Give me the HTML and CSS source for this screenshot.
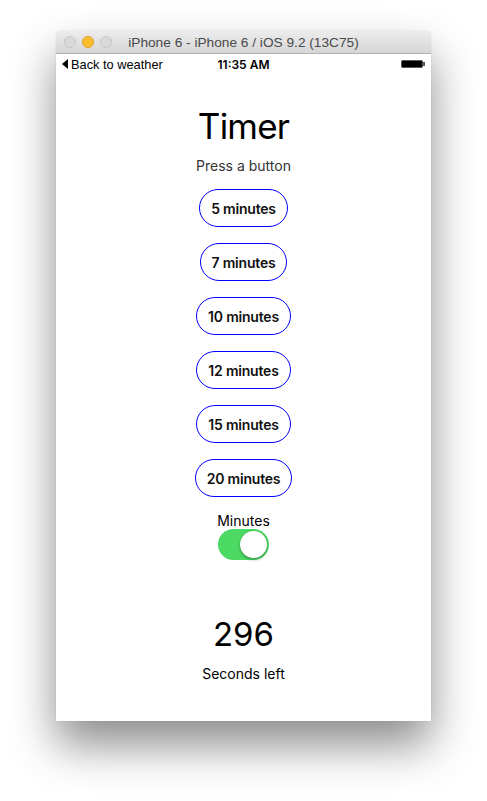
FILE: index.html
```html
<!DOCTYPE html>
<html>
<head>
<meta charset="utf-8">
<link rel="stylesheet" href="styles.css">
</head>
<body>
<div class="window">
  <div class="titlebar">
    <div class="lights">
      <span class="light grey"></span>
      <span class="light yellow"></span>
      <span class="light grey"></span>
    </div>
    <div class="title">iPhone 6 - iPhone 6 / iOS 9.2 (13C75)</div>
  </div>
  <div class="screen">
    <div class="statusbar">
      <div class="back"><svg class="tri" width="6" height="10" viewBox="0 0 6 10"><path d="M6 0 L0 5 L6 10 Z" fill="#000"/></svg>Back to weather</div>
      <div class="time">11:35 AM</div>
      <div class="battery"><span class="cell"></span><span class="nub"></span></div>
    </div>
    <div class="app">
      <div class="heading">Timer</div>
      <div class="subtitle">Press a button</div>
      <div class="buttons">
        <div class="btn">5 minutes</div>
        <div class="btn">7 minutes</div>
        <div class="btn">10 minutes</div>
        <div class="btn">12 minutes</div>
        <div class="btn">15 minutes</div>
        <div class="btn">20 minutes</div>
      </div>
      <div class="label">Minutes</div>
      <div class="switch"><span class="knob"></span></div>
      <div class="count">296</div>
      <div class="caption">Seconds left</div>
    </div>
  </div>
</div>
</body>
</html>
```
FILE: styles.css
```css
html, body {
  margin: 0;
  padding: 0;
  background: #fff;
}
body {
  width: 487px;
  height: 801px;
  overflow: hidden;
  padding-top: 31px;
  padding-left: 56px;
  box-sizing: border-box;
  font-family: Inter, "Liberation Sans", sans-serif;
}
.window {
  width: 375px;
  border-radius: 5px 5px 0 0;
  box-shadow: 0 24px 45px rgba(0,0,0,0.45), 0 0 1px rgba(0,0,0,0.3);
  background: #fff;
}
.titlebar {
  height: 23px;
  box-sizing: border-box;
  border-radius: 5px 5px 0 0;
  background: linear-gradient(#ececec, #d6d6d6);
  border-bottom: 1px solid #b3b3b3;
  display: flex;
  align-items: center;
  position: relative;
}
.lights {
  display: flex;
  gap: 6px;
  padding-left: 8px;
}
.light {
  width: 12px;
  height: 12px;
  border-radius: 50%;
  box-sizing: border-box;
}
.light.grey {
  background: #d9d9d9;
  border: 1px solid #c7c7c7;
}
.light.yellow {
  background: #fdbc2f;
  border: 1px solid #e0a22a;
}
.title {
  flex: 1;
  text-align: center;
  font-family: "Liberation Sans", Arial, sans-serif;
  font-size: 13.7px;
  color: #4a4a4a;
  margin-right: 60px;
  margin-left: 4px;
}
.screen {
  height: 667px;
  background: #fff;
}
.statusbar {
  height: 20px;
  display: flex;
  align-items: center;
  justify-content: space-between;
  padding: 0 6px 0 6px;
  font-size: 12px;
  position: relative;
}
.back {
  display: flex;
  align-items: center;
  gap: 3px;
  font-family: "Liberation Sans", Arial, sans-serif;
  font-size: 12.8px;
  color: #000;
}
.time {
  position: absolute;
  left: 0;
  right: 0;
  text-align: center;
  font-weight: 600;
  font-size: 12px;
  color: #000;
}
.battery {
  display: flex;
  align-items: center;
}
.cell {
  width: 22px;
  height: 8px;
  background: #000;
  border: 1px solid #555;
  border-radius: 1.5px;
  box-sizing: border-box;
}
.nub {
  width: 2px;
  height: 4px;
  background: #555;
}
.app {
  display: flex;
  flex-direction: column;
  align-items: center;
}
.heading {
  margin-top: 31px;
  font-size: 35px;
  letter-spacing: -0.8px;
  line-height: 43px;
  color: #000;
}
.subtitle {
  margin-top: 9px;
  font-size: 14px;
  line-height: 17px;
  color: #333;
}
.buttons {
  margin-top: 15px;
  display: flex;
  flex-direction: column;
  align-items: center;
  gap: 16px;
}
.btn {
  height: 38px;
  box-sizing: border-box;
  border: 1px solid #0000ff;
  border-radius: 19px;
  padding: 0 11px;
  display: flex;
  align-items: center;
  font-size: 14px;
  font-weight: 600;
  letter-spacing: -0.2px;
  color: #111;
}
.label {
  margin-top: 16px;
  font-size: 14px;
  line-height: 16px;
  color: #000;
}
.switch {
  margin-top: 0;
  width: 51px;
  height: 31px;
  border-radius: 16px;
  background: #4cd964;
  position: relative;
}
.knob {
  position: absolute;
  right: 2px;
  top: 2px;
  width: 27px;
  height: 27px;
  border-radius: 50%;
  background: #fff;
  box-shadow: 0 2px 3px rgba(0,0,0,0.25), 0 0 1px rgba(0,0,0,0.3);
}
.count {
  margin-top: 54px;
  font-size: 33px;
  line-height: 40px;
  color: #000;
}
.caption {
  margin-top: 11px;
  font-size: 14px;
  line-height: 17px;
  color: #000;
}
```
